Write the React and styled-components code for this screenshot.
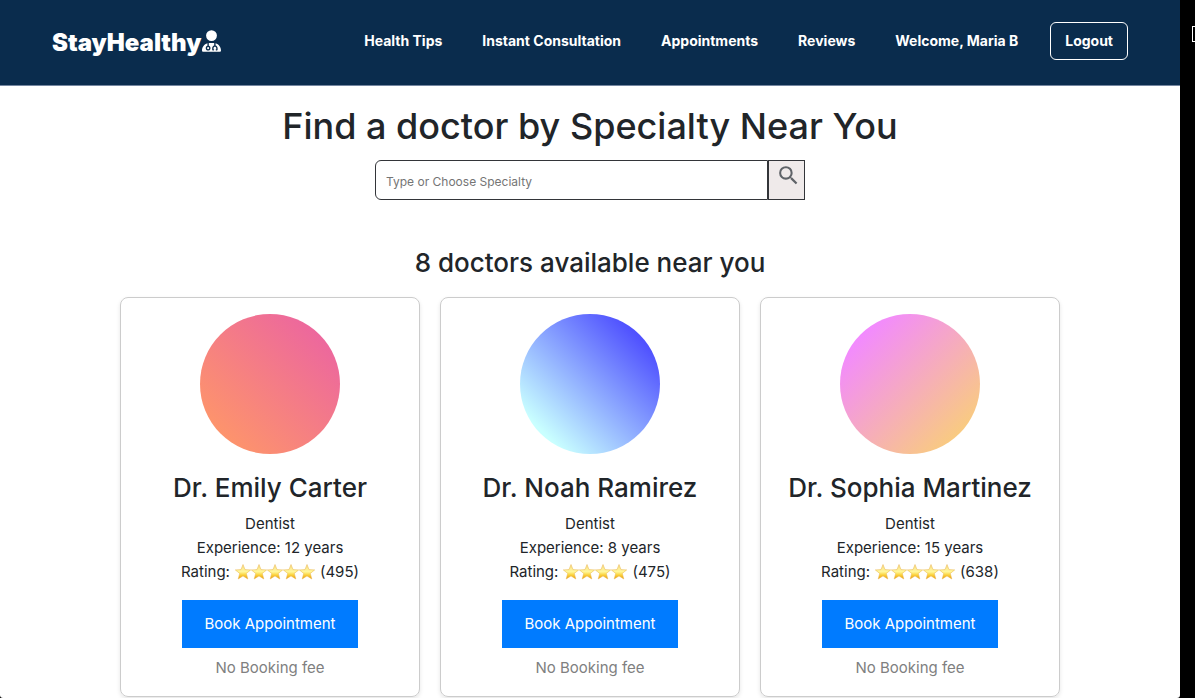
import React from 'react';
import styled, { createGlobalStyle } from 'styled-components';
import { FaUserDoctor } from 'react-icons/fa6';
import { MdSearch } from 'react-icons/md';

const GlobalStyle = createGlobalStyle`
  *, *::before, *::after { box-sizing: border-box; }
  body {
    margin: 0;
    background: #000;
    color: #212529;
    font-family: Inter, "Liberation Sans", sans-serif;
    font-size: 15px;
    line-height: 24px;
  }
  h1, h2, h3, p, ul { margin: 0; padding: 0; }
`;

const Desktop = styled.div`
  display: flex;
  height: 100vh;
  overflow: hidden;
`;

const Page = styled.div`
  flex: 1;
  min-width: 0;
  background: #fff;
  overflow: hidden;
  border-radius: 0 0 3px 3px;
`;

const Edge = styled.aside`
  flex: none;
  width: 15px;
  overflow: hidden;
  padding: 26px 0 0 12px;
`;

const EdgeWindow = styled.div`
  width: 15px;
  height: 16px;
  border: 1px solid #fff;
`;

const Navbar = styled.nav`
  display: flex;
  align-items: center;
  justify-content: space-between;
  height: 86px;
  padding: 0 52px;
  background: #0a2c4d;
  border-bottom: 1px solid #7486a0;
  font-size: 14px;
  font-weight: 700;
`;

const Logo = styled.a`
  display: flex;
  align-items: center;
  gap: 1px;
  color: #fff;
  font-size: 24px;
  font-weight: 900;
  text-decoration: none;

  svg {
    width: 19px;
    height: 22px;
    margin-bottom: 3px;
  }
`;

const NavLinks = styled.ul`
  display: flex;
  align-items: center;
  gap: 40px;
  list-style: none;
  padding-bottom: 3px;
`;

const NavItem = styled.li`
  display: flex;
  align-items: center;
  gap: 32px;
  color: #fff;
`;

const NavLink = styled.a`
  color: #fff;
  text-decoration: none;
`;

const LogoutButton = styled.button`
  height: 38px;
  padding: 0 14px;
  border: 1px solid #fff;
  border-radius: 6px;
  background: transparent;
  color: #fff;
  font: inherit;
`;

const Main = styled.main`
  display: flex;
  flex-direction: column;
  align-items: center;
`;

const Title = styled.h1`
  padding-top: 16px;
  font-size: 36px;
  font-weight: 500;
  line-height: 48px;
`;

const Search = styled.form`
  display: flex;
  width: 430px;
  height: 40px;
  margin-top: 10px;
`;

const SearchInput = styled.input`
  flex: 1;
  min-width: 0;
  padding: 4px 10px 0;
  border: 1px solid #333539;
  border-radius: 6px 0 0 6px;
  background: #fff;
  color: #212529;
  font: inherit;
  font-size: 12px;

  &::placeholder { color: #757575; opacity: 1; }
`;

const SearchButton = styled.button`
  display: flex;
  justify-content: center;
  width: 37px;
  padding: 2px 0 0 4px;
  border: 1px solid #333539;
  background: #efeaea;
  color: #5f6368;

  svg { width: 25px; height: 25px; }
`;

const ResultCount = styled.h2`
  margin-top: 46px;
  font-size: 26px;
  font-weight: 500;
  line-height: 34px;
`;

const Doctors = styled.section`
  display: flex;
  flex-wrap: wrap;
  justify-content: center;
  gap: 20px;
  margin-top: 17px;
`;

const Card = styled.article`
  display: flex;
  flex-direction: column;
  align-items: center;
  width: 300px;
  height: 400px;
  padding-top: 16px;
  border: 1px solid #ccc;
  border-radius: 8px;
  box-shadow: 0 2px 4px rgba(0, 0, 0, 0.1);
`;

const Avatar = styled.div`
  width: 140px;
  height: 140px;
  border-radius: 50%;
  background: ${({ $fill }) => $fill};
`;

const DoctorName = styled.h3`
  margin: 17px 0 7px;
  font-size: 26px;
  font-weight: 500;
  line-height: 34px;
`;

const Rating = styled.p`
  display: flex;
  align-items: center;
  gap: 5px;
`;

const Stars = styled.span`
  display: flex;

  svg { width: 16px; height: 16px; }
`;

const BookButton = styled.button`
  width: 176px;
  height: 48px;
  margin: 16px 0 8px;
  border: 0;
  background: #007bff;
  color: #fff;
  font: inherit;
`;

const Fee = styled.p`
  color: #808080;
`;

const navItems = ['Health Tips', 'Instant Consultation', 'Appointments', 'Reviews'];

const doctors = [
  {
    name: 'Dr. Emily Carter', years: 12, stars: 5, reviews: 495,
    fill: 'linear-gradient(45deg, #ff9966 6%, #ec669f 88%)',
  },
  {
    name: 'Dr. Noah Ramirez', years: 8, stars: 4, reviews: 475,
    fill: 'linear-gradient(45deg, #c9ffff 16%, #5052ff 84%)',
  },
  {
    name: 'Dr. Sophia Martinez', years: 15, stars: 5, reviews: 638,
    fill: 'linear-gradient(135deg, #f28aff 15%, #f9cc7e 87%)',
  },
];

function Star() {
  return (
    <svg viewBox="0 0 16 16" aria-hidden="true">
      <path
        d="M8 .5 10 5.6 15.7 5.9 11.3 9.4 12.8 15 8 11.9 3.2 15 4.7 9.4.3 5.9 6 5.6Z"
        fill="url(#gold)"
        stroke="#e9b54a"
        strokeWidth=".5"
        strokeLinejoin="round"
      />
    </svg>
  );
}

function DoctorCard({ doctor }) {
  return (
    <Card>
      <Avatar $fill={doctor.fill} />
      <DoctorName>{doctor.name}</DoctorName>
      <p>Dentist</p>
      <p>Experience: {doctor.years} years</p>
      <Rating>
        <span>Rating:</span>
        <Stars role="img" aria-label={`${doctor.stars} stars`}>
          {Array.from({ length: doctor.stars }, (_, i) => <Star key={i} />)}
        </Stars>
        <span>({doctor.reviews})</span>
      </Rating>
      <BookButton type="button">Book Appointment</BookButton>
      <Fee>No Booking fee</Fee>
    </Card>
  );
}

const GradientDefs = styled.svg`
  position: absolute;
  width: 0;
  height: 0;
`;

export default function App() {
  return (
    <Desktop>
      <GlobalStyle />
      <GradientDefs aria-hidden="true">
        <defs>
          <linearGradient id="gold" x1="0" y1="0" x2="0" y2="1">
            <stop offset="0" stopColor="#f9dc8a" />
            <stop offset=".5" stopColor="#fff79a" />
            <stop offset=".72" stopColor="#fbd23c" />
            <stop offset="1" stopColor="#e99a12" />
          </linearGradient>
        </defs>
      </GradientDefs>
      <Page>
        <Navbar>
          <Logo href="#home">
            <span>StayHealthy</span>
            <FaUserDoctor aria-hidden="true" />
          </Logo>
          <NavLinks>
            {navItems.map((item) => (
              <NavItem key={item}>
                <NavLink href="#">{item}</NavLink>
              </NavItem>
            ))}
            <NavItem>
              <span>Welcome, Maria B</span>
              <LogoutButton type="button">Logout</LogoutButton>
            </NavItem>
          </NavLinks>
        </Navbar>
        <Main>
          <Title>Find a doctor by Specialty Near You</Title>
          <Search role="search">
            <SearchInput type="text" aria-label="Specialty" placeholder="Type or Choose Specialty" />
            <SearchButton type="button" aria-label="Search">
              <MdSearch />
            </SearchButton>
          </Search>
          <ResultCount>8 doctors available near you</ResultCount>
          <Doctors>
            {doctors.map((doctor) => <DoctorCard key={doctor.name} doctor={doctor} />)}
          </Doctors>
        </Main>
      </Page>
      <Edge>
        <EdgeWindow />
      </Edge>
    </Desktop>
  );
}
